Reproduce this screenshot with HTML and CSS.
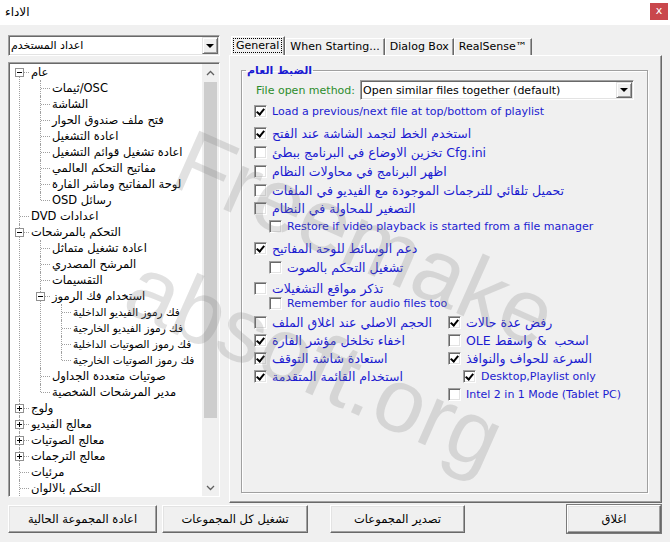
FILE: index.html
```html
<!DOCTYPE html>
<html>
<head>
  <meta charset="utf-8">
  <title>الاداء</title>
  <link rel="stylesheet" href="styles.css">
</head>
<body>
  <div class="window">
    <div class="titlebar">
      <span class="title">الاداء</span>
      <span class="close-x">x</span>
    </div>

    <div class="content">
      <div class="panes">
        <div class="sidebar">
          <div class="combo">
            <span class="combo-text"><span class="rtl">اعداد المستخدم</span></span>
            <span class="combo-btn"><i class="arrow"></i></span>
          </div>

          <div class="tree">
            <ul class="tree-list root">
              <li>
                <div class="node"><span class="toggle"></span><span class="label">عام</span></div>
                <ul class="tree-list">
                  <li><div class="node"><span class="label">OSC/ثيمات</span></div></li>
                  <li><div class="node"><span class="label">الشاشة</span></div></li>
                  <li><div class="node"><span class="label">فتح ملف صندوق الحوار</span></div></li>
                  <li><div class="node"><span class="label">اعادة التشغيل</span></div></li>
                  <li><div class="node"><span class="label">اعادة تشغيل قوائم التشغيل</span></div></li>
                  <li><div class="node"><span class="label">مفاتيح التحكم العالمي</span></div></li>
                  <li><div class="node"><span class="label">لوحة المفاتيح وماشر الفارة</span></div></li>
                  <li><div class="node"><span class="label">رسائل OSD</span></div></li>
                </ul>
              </li>
              <li><div class="node"><span class="label">اعدادات DVD</span></div></li>
              <li>
                <div class="node"><span class="toggle"></span><span class="label">التحكم بالمرشحات</span></div>
                <ul class="tree-list">
                  <li><div class="node"><span class="label">اعادة تشغيل متماثل</span></div></li>
                  <li><div class="node"><span class="label">المرشح المصدري</span></div></li>
                  <li><div class="node"><span class="label">التقسيمات</span></div></li>
                  <li>
                    <div class="node"><span class="toggle"></span><span class="label">استخدام فك الرموز</span></div>
                    <ul class="tree-list deep">
                      <li><div class="node"><span class="label">فك رموز الفيديو الداخلية</span></div></li>
                      <li><div class="node"><span class="label">فك رموز الفيديو الخارجية</span></div></li>
                      <li><div class="node"><span class="label">فك رموز الصوتيات الداخلية</span></div></li>
                      <li><div class="node"><span class="label">فك رموز الصوتيات الخارجية</span></div></li>
                    </ul>
                  </li>
                  <li><div class="node"><span class="label">صوتيات متعددة الجداول</span></div></li>
                  <li><div class="node"><span class="label">مدير المرشحات الشخصية</span></div></li>
                </ul>
              </li>
              <li><div class="node"><span class="toggle plus"></span><span class="label">ولوج</span></div></li>
              <li><div class="node"><span class="toggle plus"></span><span class="label">معالج الفيديو</span></div></li>
              <li><div class="node"><span class="toggle plus"></span><span class="label">معالج الصوتيات</span></div></li>
              <li><div class="node"><span class="toggle plus"></span><span class="label">معالج الترجمات</span></div></li>
              <li><div class="node"><span class="label">مرئيات</span></div></li>
              <li class="more"><div class="node"><span class="label">التحكم بالالوان</span></div></li>
            </ul>

            <div class="vscroll">
              <span class="sb-btn"><svg width="9" height="6" viewBox="0 0 9 6"><path d="M1 5 L4.5 1.5 L8 5" fill="none" stroke="#606060" stroke-width="1.3"/></svg></span>
              <span class="sb-track"><span class="sb-thumb"></span></span>
              <span class="sb-btn"><svg width="9" height="6" viewBox="0 0 9 6"><path d="M1 1 L4.5 4.5 L8 1" fill="none" stroke="#606060" stroke-width="1.3"/></svg></span>
            </div>
          </div>
        </div>

        <div class="settings">
          <div class="tabs">
            <span class="tab active"><span class="focus">General</span></span>
            <span class="tab">When Starting...</span>
            <span class="tab">Dialog Box</span>
            <span class="tab">RealSense™</span>
          </div>

          <div class="tab-page">
            <fieldset class="group">
              <legend class="rtl">الضبط العام</legend>

              <div class="method-row">
                <span class="method-label">File open method:</span>
                <div class="combo wide">
                  <span class="combo-text">Open similar files together (default)</span>
                  <span class="combo-btn"><i class="arrow"></i></span>
                </div>
              </div>

              <div class="check on gap3"><i class="box"></i><span>Load a previous/next file at top/bottom of playlist</span></div>
              <div class="check on gap6"><i class="box"></i><span class="rtl">استخدم الخط لتجمد الشاشة عند الفتح</span></div>
              <div class="check gap3"><i class="box"></i><span class="rtl">Cfg.ini تخزين الاوضاع في البرنامج ببطئ</span></div>
              <div class="check gap3"><i class="box"></i><span class="rtl">اظهر البرنامج في محاولات النظام</span></div>
              <div class="check gap3"><i class="box"></i><span class="rtl">تحميل تلقائي للترجمات الموجودة مع الفيديو في الملفات</span></div>
              <div class="check gap2"><i class="box"></i><span class="rtl">التصغير للمحاولة في النظام</span></div>
              <div class="check sub gap2"><i class="box"></i><span>Restore if video playback is started from a file manager</span></div>
              <div class="check on gap6"><i class="box"></i><span class="rtl">دعم الوسائط للوحة المفاتيح</span></div>
              <div class="check sub gap3"><i class="box"></i><span class="rtl">تشغيل التحكم بالصوت</span></div>
              <div class="check gap5"><i class="box"></i><span class="rtl">تذكر مواقع التشغيلات</span></div>
              <div class="check sub gapm1"><i class="box"></i><span>Remember for audio files too</span></div>

              <div class="two-cols">
                <div class="check"><i class="box"></i><span class="rtl">الحجم الاصلي عند اغلاق الملف</span></div>
                <div class="check on"><i class="box"></i><span class="rtl">رفض عدة حالات</span></div>
                <div class="check on"><i class="box"></i><span class="rtl">اخفاء تخلخل مؤشر الفارة</span></div>
                <div class="check"><i class="box"></i><span class="rtl">اسحب &nbsp;&amp; واسقط OLE</span></div>
                <div class="check on"><i class="box"></i><span class="rtl">استعادة شاشة التوقف</span></div>
                <div class="check on"><i class="box"></i><span class="rtl">السرعة للحواف والنوافذ</span></div>
                <div class="check on"><i class="box"></i><span class="rtl">استخدام القائمة المتقدمة</span></div>
                <div class="check on sub"><i class="box"></i><span>Desktop,Playlist only</span></div>
                <div></div>
                <div class="check"><i class="box"></i><span>Intel 2 in 1 Mode (Tablet PC)</span></div>
              </div>
            </fieldset>
          </div>
        </div>
      </div>

      <div class="actions">
        <button class="btn b1">اعادة المجموعة الحالية</button>
        <button class="btn b2">تشغيل كل المجموعات</button>
        <button class="btn b3">تصدير المجموعات</button>
        <button class="btn b4 default">اغلاق</button>
      </div>
    </div>

    <div class="watermark">
      <span class="wm wm-top">Freemake</span>
      <span class="wm wm-bottom">absoft.org</span>
    </div>
  </div>
</body>
</html>
```

FILE: styles.css
```css
body {
  margin: 0;
  font-family: "DejaVu Sans", sans-serif;
  font-size: 11px;
  color: #000;
}

.rtl {
  direction: rtl;
  unicode-bidi: isolate;
}

.window {
  position: relative;
  width: 670px;
  height: 542px;
  background: #f0f0f0;
  overflow: hidden;
}

/* title bar */
.titlebar {
  height: 25px;
  background: #fff;
  display: flex;
  justify-content: space-between;
  align-items: flex-start;
  padding: 0 2px 0 5px;
}

.title {
  margin-top: 5px;
  font-size: 12px;
}

.close-x {
  margin-top: 3px;
  width: 18px;
  height: 17px;
  background: #c9474c;
  color: #fff;
  font-size: 11px;
  line-height: 15px;
  text-align: center;
}

.content {
  padding: 10px 8px 0 8px;
}

.panes {
  display: flex;
  gap: 9px;
  height: 468px;
}

/* left side */
.sidebar {
  width: 212px;
  display: flex;
  flex-direction: column;
}

.combo {
  height: 21px;
  box-sizing: border-box;
  display: flex;
  align-items: center;
  background: #fff;
  border: 1px solid;
  border-color: #a0a0a0 #fff #fff #a0a0a0;
  box-shadow: inset 1px 1px #696969, inset -1px -1px #e3e3e3;
}

.combo-text {
  flex: 1;
  padding-left: 2px;
  white-space: nowrap;
}

.combo-btn {
  width: 16px;
  height: 17px;
  margin-right: 1px;
  box-sizing: border-box;
  display: flex;
  align-items: center;
  justify-content: center;
  background: #f0f0f0;
  border: 1px solid;
  border-color: #e3e3e3 #696969 #696969 #e3e3e3;
  box-shadow: inset 1px 1px #fff, inset -1px -1px #a0a0a0;
}

.arrow {
  width: 0;
  height: 0;
  border-left: 4px solid transparent;
  border-right: 4px solid transparent;
  border-top: 4px solid #000;
}

.tree {
  margin-top: 6px;
  height: 435px;
  box-sizing: border-box;
  display: flex;
  background: #fff;
  border: 1px solid;
  border-color: #a0a0a0 #fff #fff #a0a0a0;
  box-shadow: inset 1px 1px #696969;
  padding: 1px 0 0 1px;
  overflow: hidden;
}

.tree-list {
  list-style: none;
  margin: 0;
  padding: 0;
}

.tree-list.root {
  flex: 1;
  overflow: hidden;
}

.tree-list .tree-list {
  padding-left: 21px;
}

.tree-list li {
  position: relative;
}

.tree-list li::after {
  content: "";
  position: absolute;
  left: 9px;
  top: 0;
  bottom: 0;
  border-left: 1px dotted #a0a0a0;
}

.tree-list li:last-child::after {
  bottom: auto;
  height: 8px;
}

.root > li:first-child::after {
  top: 8px;
}

/* the list goes on below the visible part */
.root > li.more::after {
  height: 20px;
}

.node {
  position: relative;
  height: 16px;
  padding-left: 20px;
  display: flex;
  align-items: center;
  white-space: nowrap;
}

.node::before {
  content: "";
  position: absolute;
  left: 10px;
  top: 8px;
  width: 9px;
  border-top: 1px dotted #a0a0a0;
}

.label {
  direction: rtl;
  unicode-bidi: isolate;
  padding: 0 1px;
  font-size: 11.5px;
}

.deep .label {
  font-size: 10.5px;
}

.toggle {
  position: absolute;
  z-index: 1;
  left: 5px;
  top: 4px;
  width: 9px;
  height: 9px;
  box-sizing: border-box;
  background: #fff;
  border: 1px solid #919191;
}

.toggle::before {
  content: "";
  position: absolute;
  left: 1px;
  top: 3px;
  width: 5px;
  height: 1px;
  background: #000;
}

.toggle.plus::after {
  content: "";
  position: absolute;
  left: 3px;
  top: 1px;
  width: 1px;
  height: 5px;
  background: #000;
}

.vscroll {
  width: 17px;
  display: flex;
  flex-direction: column;
  background: #f0f0f0;
}

.sb-btn {
  height: 17px;
  display: flex;
  align-items: center;
  justify-content: center;
}

.sb-track {
  flex: 1;
  padding: 1px 2px 0 2px;
}

.sb-thumb {
  display: block;
  height: 336px;
  background: #cdcdcd;
}

/* right side */
.settings {
  flex: 1;
  display: flex;
  flex-direction: column;
}

.tabs {
  height: 20px;
  display: flex;
  align-items: flex-end;
  padding-left: 2px;
}

.tab {
  height: 17px;
  box-sizing: border-box;
  padding: 0 4px;
  line-height: 16px;
  white-space: nowrap;
  border: 1px solid;
  border-bottom: none;
  border-color: #fff #696969 #fff #fff;
  box-shadow: inset -1px 0 #a0a0a0;
}

.tab.active {
  height: 19px;
  padding: 1px 2px 0 1px;
}

.focus {
  display: block;
  padding: 0 3px;
  line-height: 15px;
  outline: 1px dotted #000;
  outline-offset: -1px;
}

.tab-page {
  height: 448px;
  box-sizing: border-box;
  padding: 8px 13px 0 11px;
  border: 1px solid;
  border-color: #fff #696969 #696969 #fff;
  box-shadow: inset -1px -1px #a0a0a0;
}

.group {
  margin: 0;
  height: 429px;
  box-sizing: border-box;
  padding: 0 12px 0 12px;
  border: 1px solid #a0a0a0;
  box-shadow: inset 1px 1px #fff, 1px 1px #fff;
}

.group legend {
  margin-left: -8px;
  padding: 0 1px;
  font-weight: bold;
  color: #1a1ad2;
  line-height: 13px;
}

.method-row {
  display: flex;
  align-items: center;
  margin-top: 3px;
}

.method-label {
  width: 104px;
  padding-left: 2px;
  color: #2c8c2c;
  white-space: nowrap;
}

.combo.wide {
  width: 274px;
  height: 20px;
}

.combo.wide .combo-btn {
  height: 16px;
}

.check {
  height: 16px;
  display: flex;
  align-items: center;
  color: #1c1cd0;
  white-space: nowrap;
}

.check .rtl {
  font-size: 12.5px;
}

.check.sub {
  padding-left: 15px;
}

.gap2 { margin-top: 2px; }
.gap3 { margin-top: 3px; }
.gap5 { margin-top: 5px; }
.gap6 { margin-top: 6px; }
.gapm1 { margin-top: -1px; }

.box {
  position: relative;
  flex: none;
  width: 13px;
  height: 13px;
  margin-right: 5px;
  box-sizing: border-box;
  background: #fff;
  border: 1px solid;
  border-color: #a0a0a0 #fff #fff #a0a0a0;
  box-shadow: inset 1px 1px #696969, inset -1px -1px #e3e3e3;
}

.check.on .box::after {
  content: "";
  position: absolute;
  left: 3px;
  top: 1px;
  width: 3px;
  height: 6px;
  border: solid #000;
  border-width: 0 2px 2px 0;
  transform: rotate(40deg);
}

.two-cols {
  display: grid;
  grid-template-columns: 194px 1fr;
  grid-auto-rows: 16px;
  row-gap: 2px;
  margin-top: 3px;
}

/* bottom buttons */
.actions {
  display: flex;
  margin-top: 2px;
}

.btn {
  height: 28px;
  padding: 0;
  font-family: inherit;
  font-size: 11.5px;
  color: #000;
  background: #f0f0f0;
  border: 1px solid;
  border-color: #fff #696969 #696969 #fff;
  box-shadow: inset -1px -1px #a0a0a0, inset 1px 1px #e3e3e3;
  direction: rtl;
}

.b1 { width: 149px; }
.b2 { width: 146px; margin-left: 5px; }
.b3 { width: 135px; margin-left: 22px; }
.b4 { width: 94px; margin-left: auto; margin-right: 1px; }

.btn.default {
  outline: 1px solid #7a7a7a;
}

/* watermark over the screenshot */
.watermark {
  position: absolute;
  inset: 0;
  pointer-events: none;
}

.wm {
  position: absolute;
  font-family: "Liberation Sans", sans-serif;
  font-size: 90px;
  color: rgba(128, 128, 128, 0.24);
  transform-origin: 0 50%;
  transform: rotate(24deg);
  white-space: nowrap;
}

.wm-top {
  left: 180px;
  top: 105px;
}

.wm-bottom {
  left: 132px;
  top: 230px;
}
```
